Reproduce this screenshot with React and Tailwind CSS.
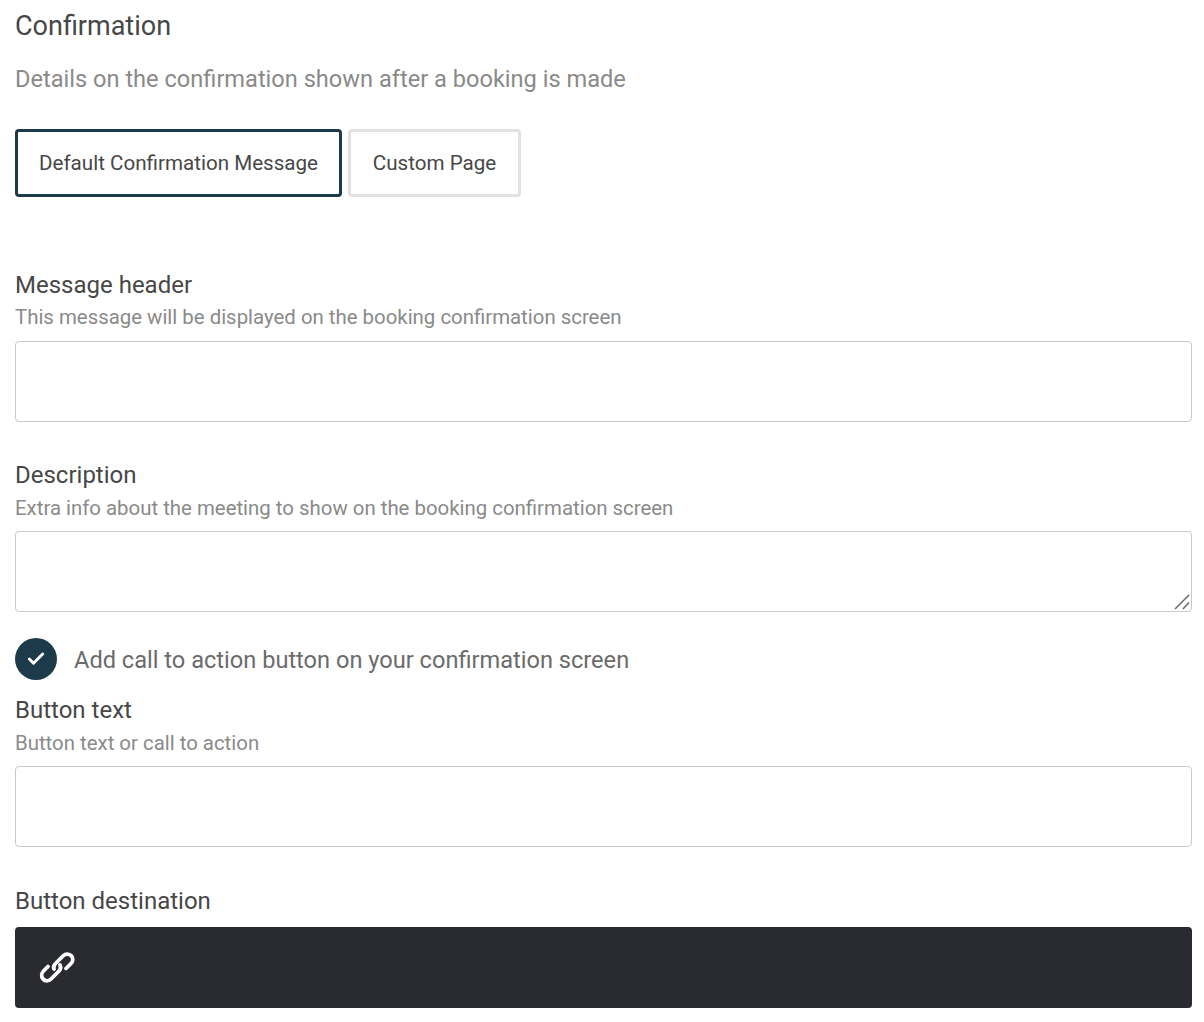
import { Check } from 'lucide-react';

const Field = ({ label, hint, hintClass = 'mt-[4px]', className = '', children }) => (
  <div className={className}>
    <div className="text-[24px] leading-[30px] text-[#474747]">{label}</div>
    {hint && <div className={`${hintClass} text-[20.4px] leading-[26px] text-[#8a8a8a]`}>{hint}</div>}
    {children}
  </div>
);

const inputClass =
  'block w-full h-[81px] rounded-[4px] border border-[#c9c9c9] bg-white';

export default function App() {
  return (
    <div className="min-h-[1022px] bg-white pl-[15px] pr-[12px] pt-[9px] font-['Roboto',sans-serif]">
      <h1 className="text-[27px] leading-[34px] font-normal text-[#474747]">Confirmation</h1>
      <p className="mt-[21px] text-[23.6px] leading-[30px] text-[#8a8a8a]">
        Details on the confirmation shown after a booking is made
      </p>

      <div className="mt-[35px] flex gap-[6px]">
        <button className="h-[68px] w-[327px] rounded-[4px] border-[3px] border-[#1c3a4a] bg-white text-[20.6px] text-[#474747]">
          Default Confirmation Message
        </button>
        <button className="h-[68px] w-[173px] rounded-[4px] border-[3px] border-[#e2e2e2] bg-white text-[20.6px] text-[#474747]">
          Custom Page
        </button>
      </div>

      <Field className="mt-[73px]" label="Message header" hint="This message will be displayed on the booking confirmation screen">
        <input className={`${inputClass} mt-[11px]`} />
      </Field>

      <Field className="mt-[38px]" hintClass="mt-[5px]" label="Description" hint="Extra info about the meeting to show on the booking confirmation screen">
        <div className="relative mt-[10px]">
          <textarea className={`${inputClass} resize-none`} />
          <svg className="absolute bottom-[2px] right-[2px]" width="16" height="16" viewBox="0 0 16 16" fill="none" stroke="#6e6e6e" strokeWidth="1.6">
            <path d="M1 15 L15 1" />
            <path d="M9 15 L15 8.5" />
          </svg>
        </div>
      </Field>

      <div className="mt-[26px] flex items-center gap-[17px]">
        <span className="flex h-[42px] w-[42px] items-center justify-center rounded-full bg-[#1c3a4a]">
          <Check size={20} strokeWidth={3.5} className="text-white" />
        </span>
        <span className="mt-[2px] text-[23.6px] leading-[30px] text-[#6b6b6b]">
          Add call to action button on your confirmation screen
        </span>
      </div>

      <Field className="mt-[15px]" hintClass="mt-[5px]" label="Button text" hint="Button text or call to action">
        <input className={`${inputClass} mt-[10px]`} />
      </Field>

      <Field className="mt-[39px]" label="Button destination">
        <div className="mt-[11px] flex h-[81px] items-center rounded-[4px] bg-[#2a2b30] pl-[20px]">
          <svg width="44" height="44" viewBox="0 0 44 44" fill="none" stroke="white" strokeWidth="3.8" strokeLinecap="round" className="-mt-[2px]">
            <path d="M19 24 C18 22 19 20 21 18 L28 11 C30.5 8.5 34.5 8.5 36.5 11 C38.5 13.5 38 16.5 36 18.5 L31 23.5" />
            <path d="M25 20 C26 22 25.5 24.5 23.5 26.5 L16 34 C13.5 36.5 10 36.5 8 34 C6 31.5 6.5 28 8.5 26 L13 21.5" />
          </svg>
        </div>
      </Field>
    </div>
  );
}
